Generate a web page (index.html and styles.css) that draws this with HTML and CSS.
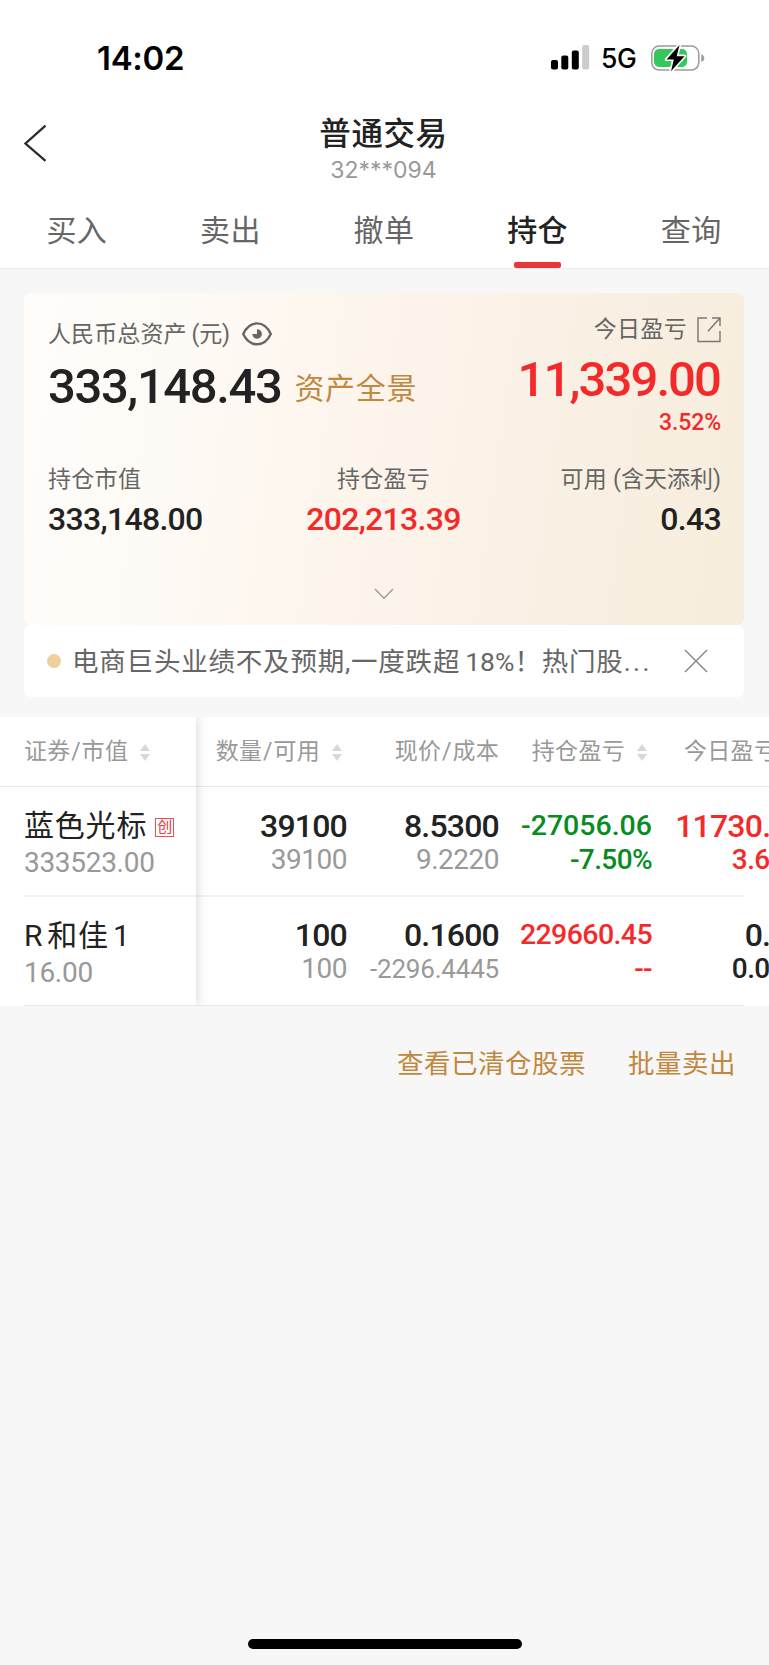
FILE: index.html
```
<!DOCTYPE html>
<html lang="zh-CN">
<head>
    <meta charset="UTF-8">
    <title>普通交易</title>
    <link rel="stylesheet" href="styles.css">
</head>
<body>
    <div class="page">
        <div class="status">
            <span class="time">14:02</span>
            <div class="status_right">
                <svg class="signal" width="39" height="25" viewBox="0 0 39 25">
                    <rect x="0" y="15" width="7" height="9.5" rx="2"/>
                    <rect x="10.3" y="10.5" width="7" height="14" rx="2"/>
                    <rect x="20.8" y="5.5" width="7" height="19" rx="2"/>
                    <rect x="31.2" y="0" width="7" height="24.5" rx="2" fill="#ccc"/>
                </svg>
                <span class="net">5G</span>
                <svg class="battery" width="54" height="28" viewBox="0 0 54 28">
                    <rect x="0.8" y="2.1" width="47" height="24" rx="7.5" fill="none" stroke="#9c9c9c" stroke-width="1.5"/>
                    <path d="M50.3 10.3c2.2 1 3 2.3 3 3.9s-.8 2.9-3 3.9z" fill="#9c9c9c"/>
                    <rect x="3" y="5" width="33" height="18" rx="5" fill="#34c759"/>
                    <path d="M28.5 1L15.5 15.4h7.3L20 27.2l13.5-15h-7.8z" stroke="#fff" stroke-width="3.4" stroke-linejoin="round"/>
                    <path d="M28.5 1L15.5 15.4h7.3L20 27.2l13.5-15h-7.8z"/>
                </svg>
            </div>
        </div>
        <div class="header">
            <svg class="back" width="24" height="38" viewBox="0 0 24 38">
                <path d="M21.5 1.7L1.5 19.5l20 17.3" fill="none" stroke="#2c2c2c" stroke-width="2.3"/>
            </svg>
            <div class="title_box">
                <div class="title">普通交易</div>
                <div class="account">32***094</div>
            </div>
        </div>
        <div class="tabs">
            <a class="tab">买入</a>
            <a class="tab">卖出</a>
            <a class="tab">撤单</a>
            <a class="tab on">持仓</a>
            <a class="tab">查询</a>
        </div>

        <div class="asset">
            <div class="asset_top">
                <div class="total">
                    <div class="label">人民币总资产<span class="paren">(元)</span>
                        <svg class="eye" width="30" height="24" viewBox="0 0 30 24">
                            <path d="M1.2 12C4.5 5 9.5 1.4 15 1.4S25.5 5 28.8 12C25.5 19 20.5 22.3 15 22.3S4.5 19 1.2 12z" fill="none" stroke="#666" stroke-width="2.4" stroke-linejoin="round"/>
                            <path d="M15 7.2v4.8h-4.7a4.8 4.8 0 1 0 4.7-4.8z" fill="#666"/>
                        </svg>
                    </div>
                    <div class="big_row">
                        <span class="big">333,148.43</span>
                        <a class="panorama">资产全景</a>
                    </div>
                </div>
                <div class="today">
                    <div class="label">今日盈亏
                        <svg class="share" width="24" height="26" viewBox="0 0 24 26">
                            <path d="M10 1H1v23.5h22V14M15 1h8v8M23 1L11 14.3" fill="none" stroke="#777" stroke-width="1.4"/>
                        </svg>
                    </div>
                    <div class="big red">11,339.00</div>
                    <div class="percent red">3.52%</div>
                </div>
            </div>
            <div class="stats">
                <div class="stat">
                    <div class="label">持仓市值</div>
                    <div class="value">333,148.00</div>
                </div>
                <div class="stat center">
                    <div class="label">持仓盈亏</div>
                    <div class="value red">202,213.39</div>
                </div>
                <div class="stat right">
                    <div class="label">可用<span class="paren">(含天添利)</span></div>
                    <div class="value">0.43</div>
                </div>
            </div>
            <svg class="down" width="20" height="12" viewBox="0 0 20 12">
                <path d="M1 1l9 9.2L19 1" fill="none" stroke="#999" stroke-width="1.3"/>
            </svg>
        </div>
        <div class="notice">
            <i class="dot"></i>
            <span class="notice_text">电商巨头业绩不及预期,一度跌超<span class="num18">18%</span>！热门股<span class="more">...</span></span>
            <svg class="close" width="24" height="24" viewBox="0 0 24 24">
                <path d="M1 1l22 22M23 1L1 23" fill="none" stroke="#8a8a8a" stroke-width="1.5"/>
            </svg>
        </div>

        <div class="table">
            <div class="fixed_col">
                <div class="th">证券<b>/</b>市值<i class="sort"></i></div>
                <div class="name_cell">
                    <div class="name">蓝色光标<span class="tag">创</span></div>
                    <div class="sub">333523.00</div>
                </div>
                <div class="name_cell">
                    <div class="name"><span class="latin_r">R</span>和佳<span class="latin_1">1</span></div>
                    <div class="sub">16.00</div>
                </div>
            </div>
            <div class="scroll_col">
                <div class="thead">
                    <div class="th">数量<b>/</b>可用<i class="sort"></i></div>
                    <div class="th">现价<b>/</b>成本</div>
                    <div class="th">持仓盈亏<i class="sort"></i></div>
                    <div class="th">今日盈亏<i class="sort"></i></div>
                </div>
                <div class="row">
                    <div class="cell"><p>39100</p><p class="sub">39100</p></div>
                    <div class="cell"><p>8.5300</p><p class="sub">9.2220</p></div>
                    <div class="cell green"><p class="profit">-27056.06</p><p class="rate">-7.50%</p></div>
                    <div class="cell red"><p>11730.00</p><p class="rate">3.65%</p></div>
                </div>
                <div class="row">
                    <div class="cell"><p>100</p><p class="sub">100</p></div>
                    <div class="cell"><p>0.1600</p><p class="sub small">-2296.4445</p></div>
                    <div class="cell red"><p class="profit">229660.45</p><p class="rate">--</p></div>
                    <div class="cell"><p>0.00</p><p class="rate">0.00%</p></div>
                </div>
            </div>
        </div>
        <div class="links">
            <a>查看已清仓股票</a>
            <a>批量卖出</a>
        </div>
        <div class="home_bar"></div>
    </div>
</body>
</html>
```
FILE: styles.css
```
* {
    margin: 0;
    padding: 0;
    box-sizing: border-box;
}
body {
    background-color: #f7f7f7;
    color: #222;
    font-family: Roboto, "Noto Sans CJK SC", sans-serif;
}
svg {
    display: block;
    flex: none;
}
.page {
    display: flex;
    flex-direction: column;
    width: 769px;
    height: 1665px;
    overflow: hidden;
}
.red {
    color: #f42a2a;
}
.green {
    color: #078c1f;
}

/* 状态栏 */
.status {
    display: flex;
    justify-content: space-between;
    height: 106px;
    padding: 37px 64px 0 97px;
    background-color: #fff;
    color: #000;
    font-family: Inter, sans-serif;
}
.time {
    padding-top: 1px;
    font-size: 33px;
    font-weight: 600;
    line-height: 41px;
    letter-spacing: -0.3px;
}
.status_right {
    display: flex;
    align-items: center;
    height: 41px;
}
.signal {
    margin-right: -1px;
}
.net {
    width: 37px;
    margin: 0 13px 0 12px;
    font-size: 26.5px;
    font-weight: 500;
    letter-spacing: -0.5px;
}

/* 标题 */
.header {
    display: flex;
    height: 86px;
    padding-left: 24px;
    background-color: #fff;
}
.back {
    margin-top: 18px;
}
.title_box {
    flex: 1;
    padding-right: 50px;
    text-align: center;
}
.title {
    margin-top: 8px;
    font-size: 31.5px;
    font-weight: 500;
    line-height: 42px;
    letter-spacing: 0.6px;
}
.account {
    color: #999;
    font-family: Inter, sans-serif;
    font-size: 23px;
    line-height: 28px;
}
.tabs {
    display: flex;
    height: 77px;
    padding-right: 1px;
    background-color: #fff;
    border-bottom: 1px solid #ebebeb;
}
.tab {
    display: flex;
    flex-direction: column;
    align-items: center;
    justify-content: space-between;
    flex: 1;
    color: #666;
    font-size: 30px;
    line-height: 78px;
    letter-spacing: 0.4px;
}
.tab.on {
    color: #222;
    font-weight: 500;
}
.tab.on::after {
    content: "";
    width: 47px;
    height: 6px;
    margin-top: -9px;
    border-radius: 2px;
    background-color: #e93639;
}

/* 资产卡片 */
.asset {
    display: flex;
    flex-direction: column;
    height: 332px;
    margin: 24px 25px 0 24px;
    padding: 0 23px 0 24px;
    border-radius: 7px;
    background: linear-gradient(98deg, #fffcfa 0%, #fefaf5 22%, #fdf5ec 47%, #f9f0e4 75%, #f6eddc 100%);
}
.asset_top {
    display: flex;
    justify-content: space-between;
    height: 171px;
}
.label {
    display: flex;
    align-items: center;
    height: 32px;
    color: #666;
    font-size: 23px;
    line-height: 32px;
    letter-spacing: 0.3px;
}
.paren {
    margin-left: 5px;
    letter-spacing: -0.2px;
}
.total {
    padding-top: 26px;
}
.total .label {
    letter-spacing: 0.1px;
}
.eye {
    margin: -2px 0 0 12px;
}
.big_row {
    display: flex;
    align-items: center;
    margin-top: 4px;
}
.big {
    font-size: 49px;
    font-weight: 500;
    line-height: 64px;
    letter-spacing: -1.4px;
}
.panorama {
    margin: 0 0 2px 13px;
    color: #c0893f;
    font-size: 30px;
    letter-spacing: 0.7px;
}
.today {
    display: flex;
    flex-direction: column;
    align-items: flex-end;
    padding-top: 21px;
}
.share {
    margin-left: 10px;
}
.today .big {
    margin-top: 2px;
    letter-spacing: -1.9px;
    padding-right: 1px;
}
.percent {
    font-size: 23px;
    font-weight: 500;
    line-height: 22px;
    letter-spacing: -0.1px;
}
.stats {
    display: grid;
    grid-template-columns: 1fr 1fr 1fr;
}
.stat.center .label {
    justify-content: center;
}
.stat.center {
    padding-right: 2px;
    text-align: center;
}
.stat.right .label {
    justify-content: flex-end;
}
.stat.right .paren {
    margin-left: 6px;
    letter-spacing: 0;
}
.stat.right {
    text-align: right;
}
.value {
    font-size: 32px;
    font-weight: 500;
    line-height: 47px;
    letter-spacing: -0.7px;
}
.down {
    margin: 45px auto 0 326px;
}

/* 资讯 */
.notice {
    display: flex;
    align-items: center;
    height: 72px;
    margin: 0 25px 0 24px;
    padding: 0 36px 0 23px;
    border-radius: 7px;
    background-color: #fff;
    color: #666;
    font-size: 26.5px;
    letter-spacing: 0.8px;
}
.dot {
    width: 14px;
    height: 14px;
    margin-right: 11px;
    border-radius: 50%;
    background-color: #edd09c;
}
.notice_text {
    flex: 1;
    margin-top: -4px;
    white-space: nowrap;
}
.num18 {
    margin-left: 5px;
    letter-spacing: 0;
}
.more {
    letter-spacing: 2.5px;
}

/* 持仓列表 */
.table {
    display: flex;
    height: 289px;
    margin-top: 20px;
    background-color: #fff;
    overflow: hidden;
}
.fixed_col {
    position: relative;
    flex: none;
    width: 196px;
    background-color: #fff;
    box-shadow: 0 0 12px rgba(0, 0, 0, 0.18);
}
.th {
    display: flex;
    align-items: center;
    padding-top: 1px;
    color: #999;
    font-size: 23px;
    line-height: 68px;
    letter-spacing: 0.3px;
    white-space: nowrap;
}
.th b {
    width: 11px;
    font-weight: 400;
    text-align: center;
}
.sort {
    display: flex;
    flex-direction: column;
    gap: 3px;
    margin-left: 12px;
}
.sort::before,
.sort::after {
    content: "";
    border: 5px solid transparent;
}
.sort::before {
    border-top: 0;
    border-bottom: 7px solid #d8d8d8;
}
.sort::after {
    border-bottom: 0;
    border-top: 7px solid #d8d8d8;
}
.fixed_col .th,
.thead {
    height: 70px;
    border-bottom: 1px solid #e9e9e9;
}
.fixed_col .th {
    padding-left: 24px;
}
.name_cell {
    height: 110px;
    margin-left: 24px;
    padding-top: 18px;
    border-bottom: 2px solid #f4f4f4;
}
.name {
    display: flex;
    align-items: center;
    font-size: 30px;
    line-height: 42px;
    letter-spacing: 0.8px;
    white-space: nowrap;
}
.tag {
    width: 19px;
    height: 19px;
    margin: 3px 0 0 8px;
    border: 1px solid #ec5050;
    color: #e83a3a;
    font-size: 15px;
    line-height: 17px;
    letter-spacing: 0;
    text-align: center;
}
.latin_r {
    margin-right: 4px;
}
.latin_1 {
    margin-left: 4px;
}
.sub {
    color: #999;
    font-size: 28px;
    line-height: 32px;
}
.name_cell .sub {
    line-height: 31px;
    letter-spacing: -0.3px;
}
.scroll_col {
    flex: none;
    width: 612px;
}
.thead,
.row {
    display: grid;
    grid-template-columns: 151px 152px 153px 153px;
}
.thead .th {
    justify-content: flex-end;
}
.thead .th:nth-child(1) {
    padding-right: 5px;
}
.thead .th:nth-child(3) {
    padding-right: 5px;
}
.thead .th:nth-child(4) {
    justify-content: flex-start;
    padding-left: 32px;
}
.row {
    width: 548px;
    height: 110px;
    padding-top: 21px;
    border-bottom: 2px solid #f4f4f4;
}
.cell {
    text-align: right;
    font-size: 32px;
    font-weight: 500;
    white-space: nowrap;
}
.cell p {
    height: 34px;
    line-height: 36px;
    letter-spacing: -0.8px;
}
.cell .sub {
    font-weight: 400;
    letter-spacing: -0.5px;
}
.cell .small {
    font-size: 26px;
    letter-spacing: -0.2px;
}
.cell .profit {
    font-size: 28.5px;
    letter-spacing: -0.6px;
}
.green .profit {
    letter-spacing: 0;
}
.cell .rate {
    font-size: 28px;
    letter-spacing: -0.6px;
}
.fixed_col .name_cell:last-child,
.row:last-child {
    height: 109px;
    border-bottom: 1px solid #e9e9e9;
}
.row:last-child {
    padding-top: 20px;
}

/* 底部 */
.links {
    display: flex;
    justify-content: flex-end;
    gap: 42px;
    padding: 38px 33px 0 0;
    color: #c0893f;
    font-size: 26.5px;
    line-height: 40px;
    letter-spacing: 0.5px;
}
.home_bar {
    width: 274px;
    height: 10px;
    margin: auto auto 16px;
    border-radius: 5px;
    background-color: #000;
}
```
